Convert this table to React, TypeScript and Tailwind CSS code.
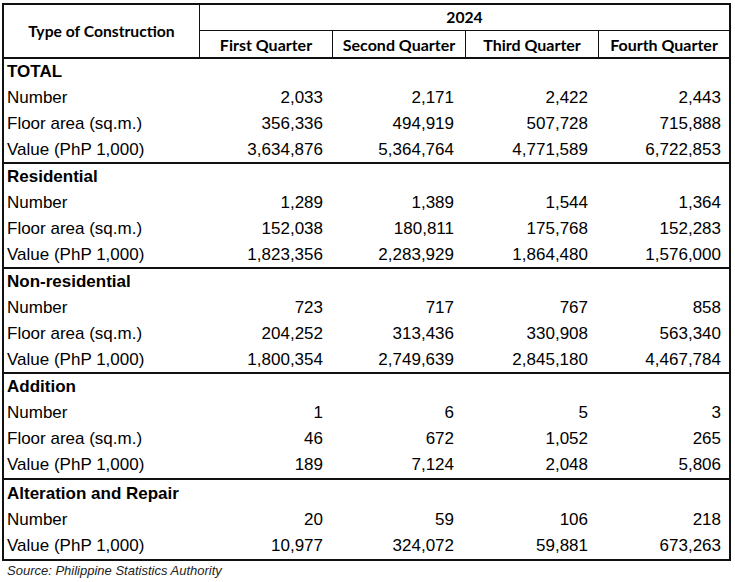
import React from "react";

type Row = { label: string; values: string[] };
type Section = { title: string; rows: Row[] };

const sections: Section[] = [
  {
    title: "TOTAL",
    rows: [
      { label: "Number", values: ["2,033", "2,171", "2,422", "2,443"] },
      { label: "Floor area (sq.m.)", values: ["356,336", "494,919", "507,728", "715,888"] },
      { label: "Value (PhP 1,000)", values: ["3,634,876", "5,364,764", "4,771,589", "6,722,853"] },
    ],
  },
  {
    title: "Residential",
    rows: [
      { label: "Number", values: ["1,289", "1,389", "1,544", "1,364"] },
      { label: "Floor area (sq.m.)", values: ["152,038", "180,811", "175,768", "152,283"] },
      { label: "Value (PhP 1,000)", values: ["1,823,356", "2,283,929", "1,864,480", "1,576,000"] },
    ],
  },
  {
    title: "Non-residential",
    rows: [
      { label: "Number", values: ["723", "717", "767", "858"] },
      { label: "Floor area (sq.m.)", values: ["204,252", "313,436", "330,908", "563,340"] },
      { label: "Value (PhP 1,000)", values: ["1,800,354", "2,749,639", "2,845,180", "4,467,784"] },
    ],
  },
  {
    title: "Addition",
    rows: [
      { label: "Number", values: ["1", "6", "5", "3"] },
      { label: "Floor area (sq.m.)", values: ["46", "672", "1,052", "265"] },
      { label: "Value (PhP 1,000)", values: ["189", "7,124", "2,048", "5,806"] },
    ],
  },
  {
    title: "Alteration and Repair",
    rows: [
      { label: "Number", values: ["20", "59", "106", "218"] },
      { label: "Value (PhP 1,000)", values: ["10,977", "324,072", "59,881", "673,263"] },
    ],
  },
];

const quarters = ["First Quarter", "Second Quarter", "Third Quarter", "Fourth Quarter"];

const gridCols = "grid grid-cols-[196px_133px_133px_133px_130px]";
const valuePad = ["pr-[10px]", "pr-[12px]", "pr-[11px]", "pr-[8px]"];

export default function App() {
  return (
    <div className="w-[735px] h-[582px] bg-white text-black pt-[3px] pl-[2px]">
      <div className="w-[729px] border-2 border-[#111]">
        {/* Header */}
        <div
          className={`${gridCols} border-b-2 border-[#111] font-bold text-[16px]`}
          style={{ fontFamily: "Lato, 'Liberation Sans', sans-serif" }}
        >
          <div className="row-span-2 flex items-center justify-center border-r border-[#111] pt-[2px] text-[15.7px]">
            Type of Construction
          </div>
          <div className="col-span-4 h-[26px] flex items-center justify-center border-b border-[#111] text-[15.7px]">
            2024
          </div>
          {quarters.map((q, i) => (
            <div
              key={q}
              className={`h-[26px] pt-[1px] flex items-center justify-center ${i < 3 ? "border-r border-[#111]" : ""}`}
            >
              {q}
            </div>
          ))}
        </div>
        {/* Body */}
        <div style={{ fontFamily: "'Liberation Sans', Arial, sans-serif" }} className="text-[17px]">
          {sections.map((s, si) => {
            const isLast = si === sections.length - 1;
            const shortLast = si < 3;
            return (
              <div
                key={s.title}
                className={isLast ? "pt-[1px]" : "border-b-2 border-[#111]"}
              >
                <div className="h-[26px] leading-[26px] pl-[3px] font-bold">{s.title}</div>
                {s.rows.map((r, ri) => (
                  <div
                    key={r.label}
                    className={`${gridCols} ${shortLast && ri === s.rows.length - 1 ? "h-[25px]" : "h-[26px]"} leading-[26px]`}
                  >
                    <div className="pl-[3px] whitespace-nowrap">{r.label}</div>
                    {r.values.map((v, vi) => (
                      <div key={vi} className={`text-right ${valuePad[vi]}`}>
                        {v}
                      </div>
                    ))}
                  </div>
                ))}
              </div>
            );
          })}
        </div>
      </div>
      <div
        className="mt-[0px] pl-[5px] text-[13px] italic text-[#222]"
        style={{ fontFamily: "'Liberation Sans', Arial, sans-serif" }}
      >
        Source: Philippine Statistics Authority
      </div>
    </div>
  );
}
